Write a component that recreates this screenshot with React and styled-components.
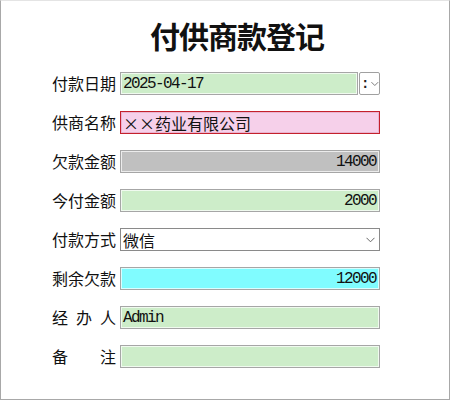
import React from "react";
import styled, { createGlobalStyle } from "styled-components";

const GlobalStyle = createGlobalStyle`
  html, body {
    margin: 0;
    padding: 0;
    background: #ffffff;
  }
  * {
    box-sizing: border-box;
  }
`;

const cjk = `"Noto Sans CJK SC", "Liberation Sans", sans-serif`;
const mono = `"Liberation Mono", "Noto Sans CJK SC", monospace`;

const Frame = styled.div`
  width: 450px;
  height: 400px;
  border: 1px solid #a8a8a8;
  border-top-color: #e4e4e4;
  background: #fff;
  padding-top: 17px;
`;

const Title = styled.h1`
  margin: 0 0 14px;
  padding-left: 24px;
  text-align: center;
  font-family: "Liberation Serif", "Noto Sans CJK SC", serif;
  font-size: 30px;
  line-height: 40px;
  font-weight: 700;
  color: #111;
  letter-spacing: -1px;
`;

const Form = styled.div`
  display: grid;
  grid-template-columns: 64px 260px;
  grid-auto-rows: 23px;
  column-gap: 4px;
  row-gap: 16px;
  padding-left: 51px;
`;

const Label = styled.div`
  font-family: ${cjk};
  font-size: 16px;
  line-height: 23px;
  color: #111;
  text-align: justify;
  text-align-last: justify;
  white-space: nowrap;
`;

const fills = {
  green: "#cdedc9",
  pink: "#f6d0ea",
  gray: "#c0c0c0",
  cyan: "#80fcff",
  white: "#ffffff",
};

const Field = styled.div`
  height: 23px;
  border: 1px solid ${(p) => (p.$tone === "pink" ? "#c4202c" : "#a6a6a6")};
  box-shadow: inset 0 0 0 1px
    ${(p) => (p.$tone === "pink" ? "#eab4d0" : "rgba(255,255,255,0.7)")};
  background: ${(p) => fills[p.$tone]};
  padding: 0 3px 0 2px;
  display: flex;
  align-items: center;
  justify-content: ${(p) => (p.$right ? "flex-end" : "flex-start")};
  font-family: ${(p) => (p.$cjk ? cjk : mono)};
  font-size: 16px;
  letter-spacing: ${(p) => (p.$cjk ? "0" : "-1.6px")};
  color: #111;
  white-space: nowrap;
  overflow: hidden;
`;

const DateRow = styled.div`
  display: flex;
  gap: 1px;
`;

const DateBox = styled(Field)`
  flex: 1;
`;

const SpinButton = styled.div`
  width: 21px;
  height: 23px;
  border: 1px solid #a0a0a0;
  border-radius: 2px;
  background: #fff;
  display: flex;
  align-items: center;
  padding-left: 1px;
  gap: 2px;
  font-family: ${mono};
  font-size: 14px;
  font-weight: 700;
  color: #222;
`;

const Select = styled(Field)`
  border-color: #8a8a8a;
  box-shadow: none;
  justify-content: space-between;
  padding-right: 4px;
`;

const Chevron = () => (
  <svg width="9" height="6" viewBox="0 0 9 6">
    <path d="M0.5 0.8 L4.5 4.8 L8.5 0.8" fill="none" stroke="#666" strokeWidth="1" />
  </svg>
);

export default function App() {
  return (
    <>
      <GlobalStyle />
      <Frame>
        <Title>付供商款登记</Title>
        <Form>
          <Label>付款日期</Label>
          <DateRow>
            <DateBox $tone="green">2025-04-17</DateBox>
            <SpinButton>
              <span>:</span>
              <Chevron />
            </SpinButton>
          </DateRow>

          <Label>供商名称</Label>
          <Field $tone="pink" $cjk>××药业有限公司</Field>

          <Label>欠款金额</Label>
          <Field $tone="gray" $right>14000</Field>

          <Label>今付金额</Label>
          <Field $tone="green" $right>2000</Field>

          <Label>付款方式</Label>
          <Select $tone="white" $cjk>
            <span>微信</span>
            <Chevron />
          </Select>

          <Label>剩余欠款</Label>
          <Field $tone="cyan" $right>12000</Field>

          <Label>经办人</Label>
          <Field $tone="green">Admin</Field>

          <Label>备注</Label>
          <Field $tone="green" />
        </Form>
      </Frame>
    </>
  );
}
